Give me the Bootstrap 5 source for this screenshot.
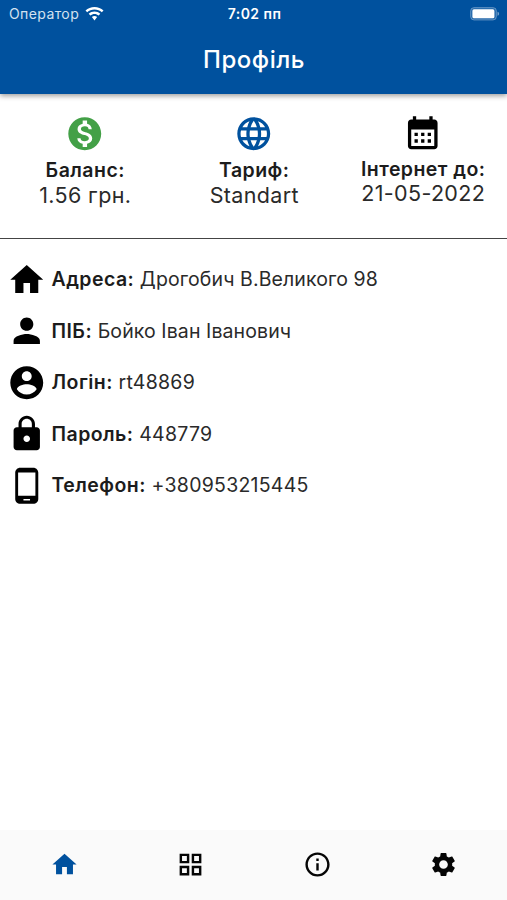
<!DOCTYPE html>
<html lang="uk">
<head>
<meta charset="utf-8">
<meta name="viewport" content="width=device-width, initial-scale=1">
<title>Профіль</title>
<link rel="stylesheet" href="https://cdn.jsdelivr.net/npm/bootstrap@5.3.0/dist/css/bootstrap.min.css">
<style>
  body { font-family: Inter, "Liberation Sans", sans-serif; color: #2a2a2a; background: #fff; line-height: 1; }
  b { font-weight: 600; letter-spacing: .45px; color: #1c1c1c; }
  svg { display: block; fill: currentColor; flex: none; }
  .app-top { height: 94px; background: #00519e; box-shadow: 0 2px 5px rgba(0,0,0,.38); }
  .status { height: 28px; padding: 0 7px 0 9px; font-size: 14px; }
  .status > * { flex: 1 1 0; }
  .carrier { color: #d4e2f0; letter-spacing: .4px; }
  .clock { letter-spacing: .45px; }
  .wifi { margin-left: 6px; }
  .app-title { height: 65px; padding-left: 1px; font-size: 24px; font-weight: 500; letter-spacing: .5px; }
  .summary { height: 145px; padding-top: 20px; border-bottom: 1.5px solid #444; }
  .stat-name { font-size: 19.5px; font-weight: 600; line-height: 24px; letter-spacing: .45px; color: #1c1c1c; padding-left: 1.5px; }
  .stat-value { font-size: 21.5px; line-height: 26px; letter-spacing: .35px; padding-left: 1.5px; }
  .last-stat { margin-top: -1px; }
  .last-stat .stat-value { line-height: 25px; }
  .details { padding: 15px 7px; }
  .detail { height: 51.4px; font-size: 19.5px; letter-spacing: .1px; gap: 5px; white-space: pre; }
  .detail > div { padding-top: 1px; }
  .digits { letter-spacing: .25px; }
  .money { color: #43a047; }
  .blue { color: #00519e; }
  .bottom-nav { height: 70px; padding: 0 0 2px 1px; background: #fafafa; color: #050505; }
</style>
<script src="https://cdn.jsdelivr.net/npm/bootstrap@5.3.0/dist/js/bootstrap.bundle.min.js"></script>
</head>
<body class="d-flex flex-column vh-100 overflow-hidden">
<header class="app-top text-white">
  <div class="status d-flex align-items-center">
    <div class="carrier d-flex align-items-center"><span>Оператор</span>
      <svg class="wifi text-white" width="19" height="14" viewBox="0 0 18 14"><path d="M9 0C5.500 0 2.400 1.300 0 3.500l1.700 1.800C3.700 3.500 6.200 2.500 9 2.500s5.300 1 7.300 2.800L18 3.500C15.600 1.300 12.500 0 9 0zM9 4.600c-2.200 0-4.200.8-5.800 2.200l1.700 1.800C6 7.600 7.400 7 9 7s3 .6 4.100 1.600l1.700-1.800C13.200 5.400 11.200 4.600 9 4.600zM9 9c-1 0-1.900.4-2.600 1L9 13.500l2.600-3.500C10.900 9.400 10 9 9 9z"/></svg>
    </div>
    <div class="clock text-center fw-semibold">7:02 пп</div>
    <div class="d-flex justify-content-end">
      <svg width="30" height="14" viewBox="0 0 30 14"><rect x=".6" y=".6" width="25.800" height="12.400" rx="3.500" fill="#fff" fill-opacity=".15" stroke="#fff" stroke-opacity=".3"/><rect x="2.400" y="2.300" width="22" height="9" rx="1.600"/><path d="M27.500 4.800c1 .3 1.600 1.100 1.600 2s-.6 1.700-1.600 2z" fill-opacity=".45"/></svg>
    </div>
  </div>
  <h1 class="app-title d-flex align-items-center justify-content-center m-0">Профіль</h1>
</header>

<section class="summary row g-0 text-center">
  <div class="col-4 d-flex flex-column align-items-center">
    <svg class="money" width="39.500" height="39.500" viewBox="0 0 24 24"><path d="M12 2C6.480 2 2 6.480 2 12s4.480 10 10 10 10-4.480 10-10S17.520 2 12 2zm1.410 16.090V20h-2.670v-1.930c-1.710-.36-3.160-1.460-3.270-3.400h1.960c.1 1.050.82 1.870 2.650 1.870 1.960 0 2.400-.98 2.400-1.590 0-.83-.44-1.610-2.670-2.140-2.480-.6-4.180-1.620-4.180-3.670 0-1.720 1.390-2.840 3.110-3.210V4h2.670v1.950c1.860.45 2.790 1.860 2.850 3.390H14.300c-.05-1.110-.64-1.870-2.220-1.870-1.500 0-2.400.68-2.400 1.640 0 .84.65 1.390 2.670 1.910s4.180 1.390 4.180 3.910c-.02 1.830-1.380 2.830-3.120 3.160z"/></svg>
    <div class="stat-name mt-1">Баланс:</div><div class="stat-value">1.56 грн.</div>
  </div>
  <div class="col-4 d-flex flex-column align-items-center">
    <svg class="blue" width="39.500" height="39.500" viewBox="0 0 24 24"><path d="M11.990 2C6.470 2 2 6.480 2 12s4.470 10 9.990 10C17.520 22 22 17.520 22 12S17.520 2 11.990 2zm6.930 6h-2.950c-.32-1.250-.78-2.450-1.380-3.560 1.840.63 3.370 1.910 4.330 3.560zM12 4.040c.83 1.200 1.480 2.530 1.910 3.960h-3.820c.43-1.430 1.080-2.760 1.910-3.960zM4.260 14C4.100 13.360 4 12.690 4 12s.1-1.360.26-2h3.380c-.08.66-.14 1.320-.14 2s.06 1.340.14 2H4.260zm.82 2h2.950c.32 1.250.78 2.450 1.380 3.560-1.840-.63-3.370-1.900-4.330-3.560zm2.950-8H5.080c.96-1.660 2.490-2.930 4.330-3.560C8.810 5.550 8.350 6.750 8.030 8zM12 19.960c-.83-1.200-1.480-2.530-1.910-3.960h3.820c-.43 1.430-1.080 2.760-1.910 3.960zM14.340 14H9.660c-.09-.66-.16-1.320-.16-2s.07-1.350.16-2h4.680c.09.65.16 1.320.16 2s-.07 1.340-.16 2zm.25 5.560c.6-1.110 1.060-2.310 1.380-3.560h2.950c-.96 1.650-2.490 2.930-4.330 3.560zM16.360 14c.08-.66.14-1.320.14-2s-.06-1.340-.14-2h3.380c.16.64.26 1.310.26 2s-.1 1.360-.26 2h-3.380z"/></svg>
    <div class="stat-name mt-1">Тариф:</div><div class="stat-value">Standart</div>
  </div>
  <div class="last-stat col-4 d-flex flex-column align-items-center">
    <svg class="text-black" width="39.500" height="39.500" viewBox="0 0 24 24"><path d="M19 4h-1V2h-2v2H8V2H6v2H5c-1.110 0-1.990.9-1.990 2L3 20c0 1.100.89 2 2 2h14c1.100 0 2-.9 2-2V6c0-1.100-.9-2-2-2zm0 16H5V10h14v10zM9 14H7v-2h2v2zm4 0h-2v-2h2v2zm4 0h-2v-2h2v2zm-8 4H7v-2h2v2zm4 0h-2v-2h2v2zm4 0h-2v-2h2v2z"/></svg>
    <div class="stat-name mt-1">Інтернет до:</div><div class="stat-value">21-05-2022</div>
  </div>
</section>

<main class="details flex-grow-1">
  <div class="detail d-flex align-items-center"><svg class="text-black" width="39.500" height="39.500" viewBox="0 0 24 24"><path d="M10 20v-6h4v6h5v-8h3L12 3 2 12h3v8z"/></svg><div><b>Адреса:</b> Дрогобич В.Великого 98</div></div>
  <div class="detail d-flex align-items-center"><svg class="text-black" width="39.500" height="39.500" viewBox="0 0 24 24"><path d="M12 12c2.210 0 4-1.790 4-4s-1.790-4-4-4-4 1.790-4 4 1.790 4 4 4zm0 2c-2.670 0-8 1.340-8 4v2h16v-2c0-2.660-5.330-4-8-4z"/></svg><div><b>ПІБ:</b> Бойко Іван Іванович</div></div>
  <div class="detail digits d-flex align-items-center"><svg class="text-black" width="39.500" height="39.500" viewBox="0 0 24 24"><path d="M12 2C6.480 2 2 6.480 2 12s4.480 10 10 10 10-4.480 10-10S17.520 2 12 2zm0 3c1.660 0 3 1.340 3 3s-1.340 3-3 3-3-1.340-3-3 1.340-3 3-3zm0 14.200c-2.500 0-4.710-1.280-6-3.220.03-1.990 4-3.080 6-3.080 1.990 0 5.970 1.090 6 3.080-1.290 1.940-3.500 3.220-6 3.220z"/></svg><div><b>Логін:</b> rt48869</div></div>
  <div class="detail digits d-flex align-items-center"><svg class="text-black" width="39.500" height="39.500" viewBox="0 0 24 24"><path d="M18 8h-1V6c0-2.760-2.240-5-5-5S7 3.240 7 6v2H6c-1.100 0-2 .9-2 2v10c0 1.100.9 2 2 2h12c1.100 0 2-.9 2-2V10c0-1.100-.9-2-2-2zm-6 9c-1.100 0-2-.9-2-2s.9-2 2-2 2 .9 2 2-.9 2-2 2zm3.100-9H8.900V6c0-1.710 1.390-3.100 3.100-3.100s3.100 1.390 3.100 3.100v2z"/></svg><div><b>Пароль:</b> 448779</div></div>
  <div class="detail digits d-flex align-items-center"><svg class="text-black" width="39.500" height="39.500" viewBox="0 0 24 24"><path d="M16 1H8C6.340 1 5 2.340 5 4v16c0 1.660 1.340 3 3 3h8c1.660 0 3-1.340 3-3V4c0-1.660-1.340-3-3-3zm-2 20h-4v-1h4v1zm3.250-3H6.750V4h10.500v14z"/></svg><div><b>Телефон:</b> +380953215445</div></div>
</main>

<nav class="bottom-nav row g-0 align-items-center">
  <div class="col-3 d-flex justify-content-center blue"><svg width="29" height="29" viewBox="0 0 24 24"><path d="M10 20v-6h4v6h5v-8h3L12 3 2 12h3v8z"/></svg></div>
  <div class="col-3 d-flex justify-content-center"><svg width="29" height="29" viewBox="0 0 24 24"><path fill-rule="evenodd" d="M3 3v8h8V3H3zm6 6H5V5h4v4zm-6 4v8h8v-8H3zm6 6H5v-4h4v4zm4-16v8h8V3h-8zm6 6h-4V5h4v4zm-6 4v8h8v-8h-8zm6 6h-4v-4h4v4z"/></svg></div>
  <div class="col-3 d-flex justify-content-center"><svg width="29" height="29" viewBox="0 0 24 24"><path d="M11 7h2v2h-2zm0 4h2v6h-2zm1-9C6.480 2 2 6.480 2 12s4.480 10 10 10 10-4.480 10-10S17.520 2 12 2zm0 18c-4.410 0-8-3.590-8-8s3.590-8 8-8 8 3.590 8 8-3.590 8-8 8z"/></svg></div>
  <div class="col-3 d-flex justify-content-center"><svg width="29" height="29" viewBox="0 0 24 24"><path d="M19.140 12.940c.04-.3.06-.61.06-.94 0-.32-.02-.64-.07-.94l2.030-1.580c.18-.14.23-.41.12-.61l-1.920-3.320c-.12-.22-.37-.29-.59-.22l-2.390.96c-.5-.38-1.030-.7-1.620-.94l-.36-2.540c-.04-.24-.24-.41-.48-.41h-3.840c-.24 0-.43.17-.47.41l-.36 2.540c-.59.24-1.130.57-1.620.94l-2.390-.96c-.22-.08-.47 0-.59.22L2.740 8.870c-.12.21-.08.47.12.61l2.030 1.580c-.05.3-.09.63-.09.94s.02.64.07.94l-2.030 1.580c-.18.14-.23.41-.12.61l1.920 3.320c.12.22.37.29.59.22l2.390-.96c.5.38 1.030.7 1.620.94l.36 2.540c.05.24.24.41.48.41h3.840c.24 0 .44-.17.47-.41l.36-2.540c.59-.24 1.130-.56 1.620-.94l2.390.96c.22.08.47 0 .59-.22l1.920-3.320c.12-.22.07-.47-.12-.61l-2.010-1.580zM12 15.600c-1.980 0-3.600-1.620-3.600-3.600s1.620-3.600 3.600-3.600 3.600 1.620 3.600 3.600-1.620 3.600-3.600 3.600z"/></svg></div>
</nav>
</body>
</html>
